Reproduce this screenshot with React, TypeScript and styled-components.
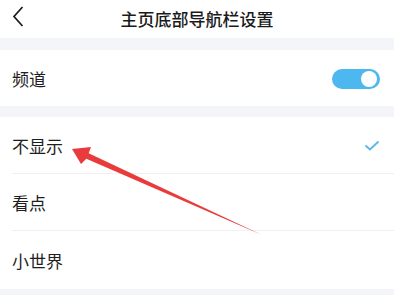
import React from "react";
import styled, { createGlobalStyle } from "styled-components";

const GlobalStyle = createGlobalStyle`
  html, body {
    margin: 0;
    padding: 0;
    background: #f4f5f9;
  }
  body {
    font-family: "Noto Sans CJK SC", "Noto Sans", sans-serif;
  }
`;

type RowProps = {
  last?: boolean;
};

const Page = styled.div`
  position: relative;
  width: 394px;
  height: 295px;
  overflow: hidden;
  background: #f4f5f9;
  display: flex;
  flex-direction: column;
`;

const Header = styled.header`
  height: 38px;
  background: #ffffff;
  display: flex;
  align-items: center;
  justify-content: center;
  position: relative;
`;

const BackButton = styled.button`
  position: absolute;
  left: 10px;
  top: 5px;
  width: 16px;
  height: 23px;
  border: none;
  background: none;
  padding: 0;
  display: flex;
  align-items: center;
  justify-content: center;
`;

const Title = styled.h1`
  margin: 0;
  font-size: 17px;
  font-weight: 500;
  color: #1a1a1a;
  line-height: 1;
  margin-top: -2px;
`;

const Section = styled.section<{ top: number }>`
  margin-top: ${({ top }) => top}px;
  background: #ffffff;
  padding-left: 12px;
`;

const Row = styled.div<RowProps & { h: number }>`
  height: ${({ h }) => h}px;
  box-sizing: border-box;
  display: flex;
  align-items: center;
  justify-content: space-between;
  padding-right: 14px;
  border-bottom: ${({ last }) => (last ? "none" : "1px solid #f0f0f2")};
`;

const Label = styled.span`
  font-size: 17px;
  color: #1e1e1e;
  line-height: 1;
`;

const Toggle = styled.div<{ on: boolean }>`
  width: 48px;
  height: 20px;
  border-radius: 10px;
  background: ${({ on }) => (on ? "#4db7ef" : "#dcdcdc")};
  position: relative;
  margin-top: 1px;
`;

const Knob = styled.div`
  position: absolute;
  right: 3px;
  top: 2px;
  width: 16px;
  height: 16px;
  border-radius: 50%;
  background: #ffffff;
`;

const Annotation = styled.svg`
  position: absolute;
  left: 0;
  top: 0;
  pointer-events: none;
`;

const options = ["不显示", "看点", "小世界"];

const App: React.FC = () => {
  return (
    <Page>
      <GlobalStyle />
      <Header>
        <BackButton>
          <svg width="12" height="21" viewBox="0 0 12 21">
            <path d="M10.5 1 L2 10.5 L10.5 20" fill="none" stroke="#1a1a1a" strokeWidth="1.7" />
          </svg>
        </BackButton>
        <Title>主页底部导航栏设置</Title>
      </Header>

      <Section top={12}>
        <Row h={56} last>
          <Label>频道</Label>
          <Toggle on>
            <Knob />
          </Toggle>
        </Row>
      </Section>

      <Section top={11}>
        {options.map((item, i) => (
          <Row key={item} h={i === 2 ? 58 : 57} last={i === 2}>
            <Label>{item}</Label>
            {i === 0 && (
              <svg width="16" height="11" viewBox="0 0 16 11">
                <path d="M1.5 5.5 L6 9.5 L14.5 1.5" fill="none" stroke="#5bb6e4" strokeWidth="1.8" />
              </svg>
            )}
          </Row>
        ))}
      </Section>

      <Annotation width="394" height="295" viewBox="0 0 394 295">
        <polygon
          points="72,149 91,147 88.7,153.3 262,235 86.3,158.7 81,164"
          fill="#e93b3b"
        />
      </Annotation>
    </Page>
  );
};

export default App;
